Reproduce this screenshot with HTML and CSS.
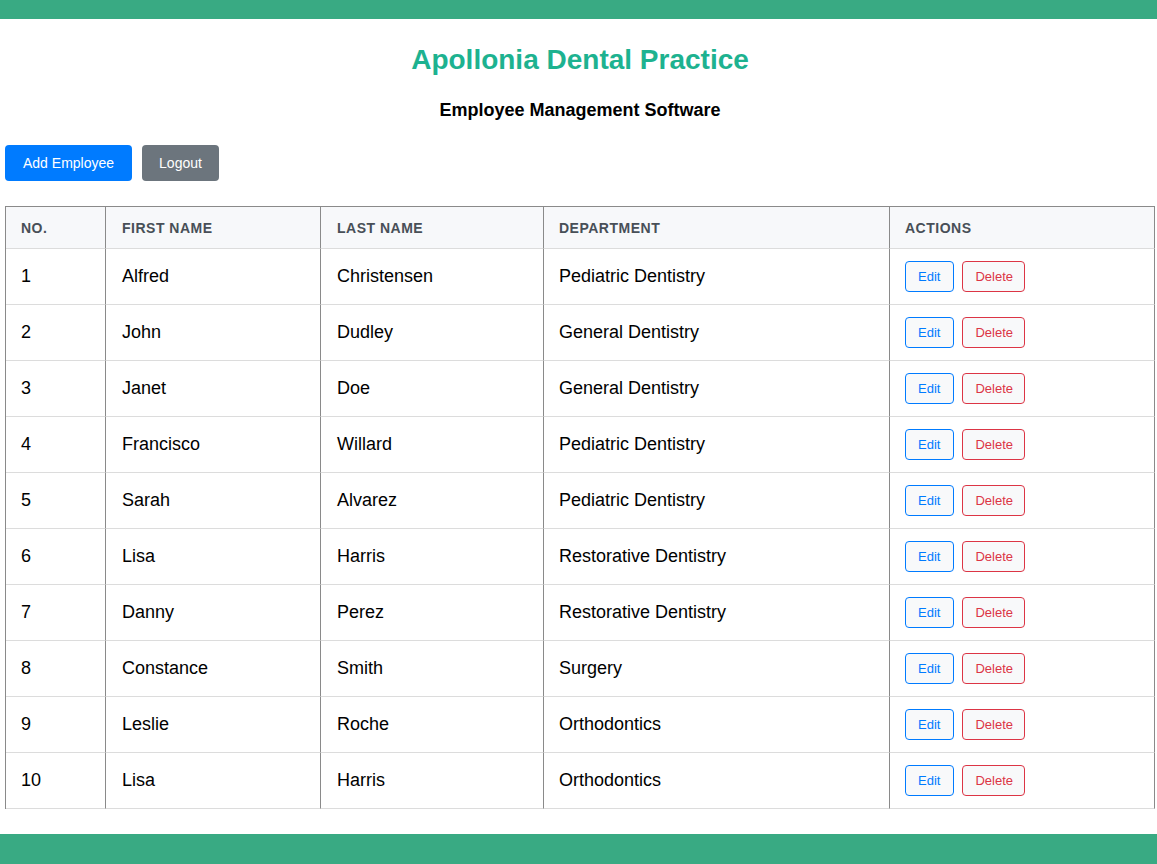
FILE: index.html
```html
<!DOCTYPE html>
<html lang="en">
<head>
<meta charset="utf-8">
<title>Apollonia Dental Practice</title>
<link rel="stylesheet" href="styles.css">
</head>
<body>
<div class="topbar"></div>
<main class="main">
  <h1 class="title">Apollonia Dental Practice</h1>
  <h2 class="subtitle">Employee Management Software</h2>
  <div class="toolbar">
    <button class="btn btn-primary">Add Employee</button>
    <button class="btn btn-secondary">Logout</button>
  </div>
  <table class="emp-table">
    <thead>
      <tr>
        <th class="c-no">No.</th>
        <th class="c-first">First Name</th>
        <th class="c-last">Last Name</th>
        <th class="c-dept">Department</th>
        <th class="c-act">Actions</th>
      </tr>
    </thead>
    <tbody>
      <tr><td>1</td><td>Alfred</td><td>Christensen</td><td>Pediatric Dentistry</td><td><button class="sbtn sbtn-edit">Edit</button><button class="sbtn sbtn-del">Delete</button></td></tr>
      <tr><td>2</td><td>John</td><td>Dudley</td><td>General Dentistry</td><td><button class="sbtn sbtn-edit">Edit</button><button class="sbtn sbtn-del">Delete</button></td></tr>
      <tr><td>3</td><td>Janet</td><td>Doe</td><td>General Dentistry</td><td><button class="sbtn sbtn-edit">Edit</button><button class="sbtn sbtn-del">Delete</button></td></tr>
      <tr><td>4</td><td>Francisco</td><td>Willard</td><td>Pediatric Dentistry</td><td><button class="sbtn sbtn-edit">Edit</button><button class="sbtn sbtn-del">Delete</button></td></tr>
      <tr><td>5</td><td>Sarah</td><td>Alvarez</td><td>Pediatric Dentistry</td><td><button class="sbtn sbtn-edit">Edit</button><button class="sbtn sbtn-del">Delete</button></td></tr>
      <tr><td>6</td><td>Lisa</td><td>Harris</td><td>Restorative Dentistry</td><td><button class="sbtn sbtn-edit">Edit</button><button class="sbtn sbtn-del">Delete</button></td></tr>
      <tr><td>7</td><td>Danny</td><td>Perez</td><td>Restorative Dentistry</td><td><button class="sbtn sbtn-edit">Edit</button><button class="sbtn sbtn-del">Delete</button></td></tr>
      <tr><td>8</td><td>Constance</td><td>Smith</td><td>Surgery</td><td><button class="sbtn sbtn-edit">Edit</button><button class="sbtn sbtn-del">Delete</button></td></tr>
      <tr><td>9</td><td>Leslie</td><td>Roche</td><td>Orthodontics</td><td><button class="sbtn sbtn-edit">Edit</button><button class="sbtn sbtn-del">Delete</button></td></tr>
      <tr><td>10</td><td>Lisa</td><td>Harris</td><td>Orthodontics</td><td><button class="sbtn sbtn-edit">Edit</button><button class="sbtn sbtn-del">Delete</button></td></tr>
    </tbody>
  </table>
</main>
<div class="footbar"></div>
</body>
</html>
```

FILE: styles.css
```css
* { box-sizing: border-box; }
html, body { margin: 0; padding: 0; }
body {
  font-family: "Liberation Sans", Arial, sans-serif;
  background: #ffffff;
  color: #000;
}
.topbar {
  height: 19px;
  background: #39aa83;
}
.main {
  padding: 0 2px 0 5px;
}
.title {
  margin: 25px 0 0;
  font-size: 28px;
  line-height: 32px;
  font-weight: bold;
  text-align: center;
  color: #1db290;
}
.subtitle {
  margin: 23px 0 0;
  font-size: 18px;
  line-height: 22px;
  font-weight: bold;
  text-align: center;
  color: #000;
}
.toolbar {
  display: flex;
  gap: 10px;
  margin-top: 24px;
}
.btn {
  font-family: inherit;
  font-size: 14px;
  line-height: 16px;
  height: 36px;
  padding: 0 18px;
  border: none;
  border-radius: 4px;
  color: #fff;
  cursor: pointer;
}
.btn-primary { background: #007bff; }
.btn-secondary { background: #6c757d; padding: 0 17px; }

.emp-table {
  margin-top: 25px;
  width: 1150px;
  border-collapse: separate;
  border-spacing: 0;
  border-top: 1px solid #8a8a8a;
  border-left: 1px solid #8a8a8a;
}
.emp-table th,
.emp-table td {
  text-align: left;
  padding: 0 15px;
  border-right: 1px solid #8a8a8a;
  border-bottom: 1px solid #dcdcdc;
  vertical-align: middle;
}
.emp-table th:nth-child(2),
.emp-table td:nth-child(2),
.emp-table th:nth-child(3),
.emp-table td:nth-child(3) {
  padding-left: 16px;
}
.emp-table th {
  height: 42px;
  background: #f7f8fa;
  font-size: 14px;
  font-weight: bold;
  letter-spacing: 0.5px;
  text-transform: uppercase;
  color: #484f57;
}
.emp-table td {
  height: 56px;
  font-size: 18px;
  color: #000;
}
.c-no { width: 100px; }
.c-first { width: 215px; }
.c-last { width: 223px; }
.c-dept { width: 346px; }
.sbtn {
  font-family: inherit;
  font-size: 13px;
  line-height: 15px;
  height: 31px;
  padding: 0 12px;
  border-radius: 4px;
  background: #f8f9fa;
  cursor: pointer;
  vertical-align: middle;
}
.sbtn + .sbtn { margin-left: 8px; }
.sbtn-edit { border: 1px solid #007bff; color: #007bff; padding: 0 13px 0 12px; }
.sbtn-del { border: 1px solid #dc3545; color: #dc3545; padding: 0 11px 0 12px; }
.footbar {
  margin-top: 25px;
  height: 30px;
  background: #39aa83;
}
```
